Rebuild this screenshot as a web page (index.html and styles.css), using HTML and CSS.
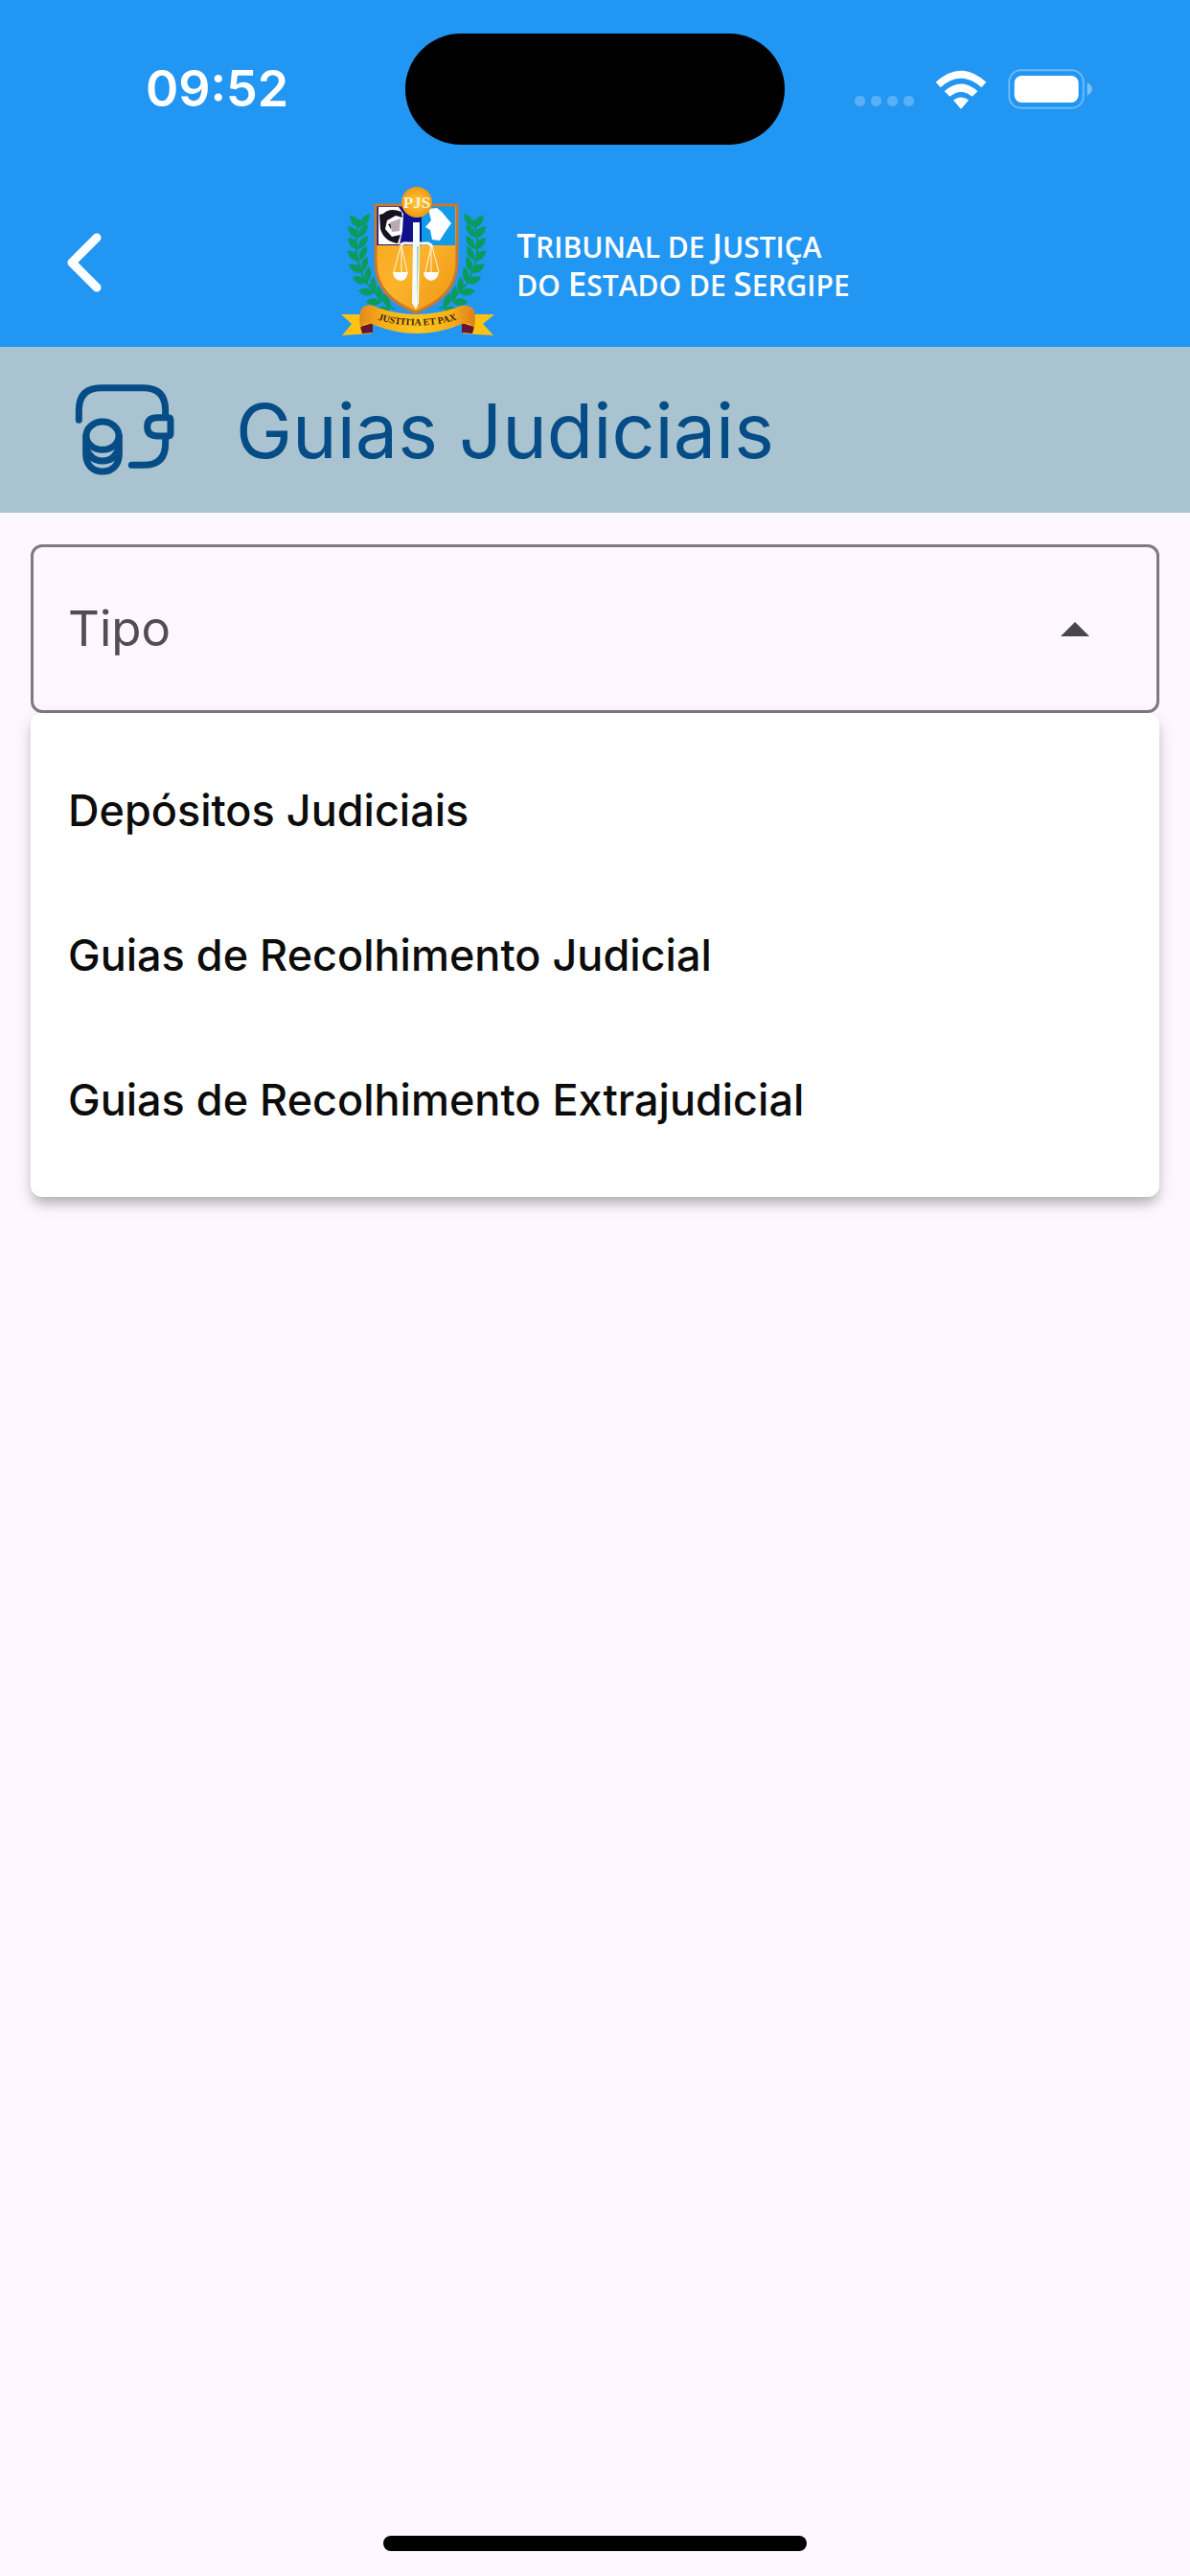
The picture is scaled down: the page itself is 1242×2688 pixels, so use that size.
FILE: index.html
```html
<!DOCTYPE html>
<html lang="pt-BR">
<head>
<meta charset="utf-8">
<meta name="viewport" content="width=device-width, initial-scale=1">
<title>Guias Judiciais</title>
<link rel="stylesheet" href="styles.css">
</head>
<body>
<div class="screen">
  <header class="top">
    <div class="status">
      <time class="clock">09:52</time>
      <div class="island"></div>
      <div class="indicators">
        <svg class="signal" viewBox="0 0 62 12" aria-hidden="true">
          <rect x="0" y="0" width="11" height="11" rx="5"/><rect x="17" y="0" width="11" height="11" rx="5"/><rect x="34" y="0" width="11" height="11" rx="5"/><rect x="51" y="0" width="11" height="11" rx="5"/>
        </svg>
        <svg class="wifi" viewBox="346 124 162 122" aria-hidden="true">
          <path d="M348 162 Q427 90 506 162 L491 178 Q427 122 363 178 Z"/>
          <path d="M375 190 Q427 144 479 190 L462 207 Q427 178 392 207 Z"/>
          <path d="M403 218 Q427 200 451 218 L430 243 Q427 246 424 243 Z"/>
        </svg>
        <svg class="battery" viewBox="576 122 262 126" aria-hidden="true">
          <rect class="shell" x="579" y="126" width="232" height="118" rx="36"/>
          <rect x="595" y="143" width="201" height="84" rx="23"/>
          <path class="cap" d="M823 165 Q838 172 838 185 Q838 198 823 205 Z"/>
        </svg>
      </div>
    </div>
    <div class="appbar">
      <button class="back" type="button" aria-label="Voltar">
        <svg viewBox="0 0 36 62" aria-hidden="true"><path d="M31 5 L5 31 L31 57"/></svg>
      </button>
      <div class="brand">
        <svg class="crest" viewBox="15 1 162 176" aria-hidden="true">
          <defs>
            <linearGradient id="gold" x1="0" y1="0" x2="1" y2="1"><stop offset="0" stop-color="#f5a414"/><stop offset=".5" stop-color="#fbb42c"/><stop offset="1" stop-color="#ee9410"/></linearGradient>
            <radialGradient id="seal"><stop offset="0" stop-color="#ffc93a"/><stop offset="1" stop-color="#f09a14"/></radialGradient>
            <linearGradient id="band" x1="0" y1="0" x2="1" y2="0"><stop offset="0" stop-color="#e28a1a"/><stop offset=".2" stop-color="#f6ae18"/><stop offset=".5" stop-color="#fcc51d"/><stop offset=".8" stop-color="#f6ae18"/><stop offset="1" stop-color="#dc801c"/></linearGradient>
            <path id="leaf" d="M0 0 Q-10 0 -11 -12 Q0 -11 0 0 Z M0 0 Q10 -3 10 -14 Q-1 -11 0 0 Z"/>
            <path id="motto" d="M55 149 Q95 160 136 149"/>
            <g id="branch">
              <path class="stem" d="M36 44 Q24 82 44 112 Q54 126 72 138"/>
              <use href="#leaf" x="36" y="52"/>
              <use href="#leaf" x="34" y="63"/>
              <use href="#leaf" x="34" y="75"/>
              <use href="#leaf" transform="translate(35 87) rotate(-8)"/>
              <use href="#leaf" transform="translate(38 99) rotate(-18)"/>
              <use href="#leaf" transform="translate(43 110) rotate(-28)"/>
              <use href="#leaf" transform="translate(50 121) rotate(-38)"/>
              <use href="#leaf" transform="translate(58 130) rotate(-48)"/>
              <use href="#leaf" transform="translate(67 137) rotate(-58)"/>
            </g>
          </defs>
          <use href="#branch" class="leaves"/>
          <use href="#branch" class="leaves" transform="translate(190 0) scale(-1 1)"/>
          <path fill="url(#gold)" d="M52 29 H137 V88 C137 118 116 132 94 141 C72 132 52 118 52 88 Z"/>
          <path fill="#10108c" d="M53 30 H100 V71 H53 Z"/>
          <path fill="#109bea" d="M100 30 H135 V71 H100 Z"/>
          <path fill="#fff" d="M55 31 H76 L81 38 L80 56 L77 70 H55 Z"/>
          <path fill="#17121f" d="M60 38 Q67 31 79 36 L80 42 L73 40 L64 45 L62 54 L69 62 L78 60 L75 69 Q61 67 57 54 L56 39 Z M65 49 L72 47 L68 54 Z"/>
          <path fill="#b9aab4" d="M67 47 L78 43 L77 56 L69 57 Z"/>
          <path fill="#fff" d="M107 33 L116 32 L121 36 L131 48 L124 58 L119 66 L111 65 L109 55 L104 52 L110 45 Z"/>
          <path fill="none" stroke="#c9792d" stroke-width="3" d="M52 29 H137 V88 C137 118 116 132 94 141 C72 132 52 118 52 88 Z"/>
          <g fill="none" stroke="#fff7e6">
            <path stroke-width="3" d="M78 71 Q80 68 86 69 H103 Q109 68 111 73"/>
            <path stroke-width="1" d="M78 72 L71 99 M79 72 V99 M79 72 L85 99 M110 72 L104 99 M110 72 V99 M111 72 L118 99"/>
          </g>
          <path fill="#fff" d="M70 99 H86 Q84 108 78 108 Q71 107 70 99 Z M102 99 H118 Q117 107 110 108 Q103 107 102 99 Z"/>
          <path fill="#f4fbfb" d="M91 47 H98 V67 L97 131 L94 138 L90 131 L91 67 Z"/>
          <path fill="#9bd0d4" d="M95 72 H97 L95 135 Z"/>
          <circle cx="95" cy="26" r="16" fill="url(#seal)"/>
          <text class="seal-text" x="95" y="32" text-anchor="middle">PJS</text>
          <path fill="#fdc313" d="M16 143 L48 143 V163 L17 165 L27 153 Z M176 143 L143 143 V163 L175 165 L164 153 Z"/>
          <path fill="#6a1231" d="M36 156 L49 152 V162 L38 163 Z M155 156 L142 152 V162 L153 163 Z"/>
          <path fill="url(#band)" d="M36 157 Q33 136 42 134 Q48 132 54 136 Q95 150 136 136 Q144 132 151 135 Q158 138 155 157 Q149 150 140 154 Q95 172 50 154 Q42 150 36 157 Z"/>
          <text class="motto-text" text-anchor="middle"><textPath href="#motto" startOffset="50%">JUSTITIA ET PAX</textPath></text>
        </svg>
        <div class="court">
          <span><b>T</b>RIBUNAL DE <b>J</b>USTIÇA</span>
          <span>DO <b>E</b>STADO DE <b>S</b>ERGIPE</span>
        </div>
      </div>
    </div>
  </header>

  <div class="section-bar">
    <svg class="wallet" viewBox="115 544 312 291" aria-hidden="true">
      <path d="M128 659 V628 Q128 558 198 558 H330 Q399 558 399 628 V650"/>
      <path d="M407 651 H374 Q342 651 342 680 Q342 709 374 709 H407 Q415 709 415 701 V659 Q415 651 407 651 Z"/>
      <path d="M399 710 V732 Q399 800 331 800 H293"/>
      <ellipse cx="202" cy="708" rx="51" ry="44"/>
      <path d="M150 708 V765 C150 800 172 820 202 820 S254 800 254 765 V708"/>
      <path d="M151 748 Q165 787 202 787 T253 748"/>
    </svg>
    <h1 class="title">Guias Judiciais</h1>
  </div>

  <main class="content">
    <div class="field">
      <select class="control" id="tipo">
        <option value=""></option>
        <option>Depósitos Judiciais</option>
        <option>Guias de Recolhimento Judicial</option>
        <option>Guias de Recolhimento Extrajudicial</option>
      </select>
      <label class="label" for="tipo">Tipo</label>
      <svg class="arrow" viewBox="0 0 30 15" aria-hidden="true"><path d="M0 15 L15 0 L30 15 Z"/></svg>
      <ul class="menu" role="listbox" aria-label="Tipo">
        <li class="option" role="option">Depósitos Judiciais</li>
        <li class="option" role="option">Guias de Recolhimento Judicial</li>
        <li class="option" role="option">Guias de Recolhimento Extrajudicial</li>
      </ul>
    </div>
  </main>

  <footer class="home"><div class="home-bar"></div></footer>
</div>
</body>
</html>
```
FILE: styles.css
```css
* { box-sizing: border-box; }

body {
  margin: 0;
  background: #fef7ff;
  font-family: Inter, "Liberation Sans", sans-serif;
}

.screen {
  display: flex;
  flex-direction: column;
  min-height: 100vh;
}

.top { background: #2196f3; }

.status {
  display: grid;
  grid-template-columns: 1fr auto 1fr;
  align-items: center;
  height: 186px;
}

.clock {
  padding-left: 30px;
  color: #fff;
  font-size: 52px;
  font-weight: 600;
  line-height: 64px;
  text-align: center;
}

.island {
  width: 396px;
  height: 116px;
  border-radius: 58px;
  background: #000;
}

.indicators {
  display: flex;
  align-items: center;
  justify-content: flex-end;
  gap: 22px;
  padding-right: 102px;
  fill: #fff;
}

.signal {
  width: 62px;
  height: 12px;
  margin-top: 26px;
  opacity: .25;
}

.wifi { width: 54px; height: 41px; }

.battery { width: 88px; height: 42px; }

.shell {
  fill: none;
  stroke: #fff;
  stroke-width: 6;
  opacity: .35;
}

.cap { opacity: .4; }

.appbar {
  display: grid;
  grid-template-columns: 1fr auto 1fr;
  align-items: center;
  height: 176px;
}

.back {
  justify-self: start;
  display: flex;
  margin: 0;
  padding: 24px 24px 24px 70px;
  border: 0;
  background: none;
}

.back svg {
  width: 36px;
  height: 62px;
  fill: none;
  stroke: #fff;
  stroke-width: 9;
  stroke-linecap: round;
  stroke-linejoin: round;
}

.brand {
  display: flex;
  align-items: center;
  gap: 22px;
}

.crest { width: 162px; height: 176px; }

.leaves { fill: #0d9a5c; }

.stem {
  fill: none;
  stroke: #0d9a5c;
  stroke-width: 2;
}

.seal-text {
  fill: #fff3cf;
  font: bold 17px "Liberation Serif", serif;
}

.motto-text {
  fill: #3a2410;
  font: bold 10px "Liberation Serif", serif;
}

.court {
  display: flex;
  flex-direction: column;
  padding-top: 4px;
  color: #fff;
  font-family: "Open Sans", "Noto Sans", sans-serif;
  font-size: 30px;
  font-weight: 600;
  line-height: 40px;
  white-space: nowrap;
}

.court span { height: 40px; }

.court b {
  font-size: 35px;
  font-weight: 600;
}

.section-bar {
  display: flex;
  align-items: center;
  gap: 64px;
  height: 173px;
  padding: 0 78px;
  background: #a9c4d0;
}

.wallet {
  width: 104px;
  height: 97px;
  fill: none;
  stroke: #064d87;
  stroke-width: 21;
  stroke-linecap: round;
  stroke-linejoin: round;
}

.title {
  margin: 0;
  color: #064d87;
  font-size: 79px;
  font-weight: 400;
  line-height: 96px;
}

.content {
  flex: 1;
  padding: 33px 32px;
}

.field {
  position: relative;
  display: grid;
  grid-template-columns: 1fr auto;
  align-items: center;
}

.control {
  grid-area: 1 / 1 / 2 / 3;
  width: 100%;
  height: 176px;
  border: 3px solid #7f7885;
  border-radius: 12px;
  background: transparent;
  font: inherit;
  font-size: 51px;
  appearance: none;
}

.label {
  grid-area: 1 / 1;
  padding-left: 39px;
  color: #514c57;
  font-size: 51px;
  line-height: 64px;
  pointer-events: none;
}

.arrow {
  grid-area: 1 / 2;
  width: 30px;
  height: 15px;
  margin-right: 73px;
  fill: #49454f;
  pointer-events: none;
}

.menu {
  position: absolute;
  top: 100%;
  left: 0;
  right: 0;
  margin: 0;
  padding: 26px 0;
  border-radius: 12px;
  background: #fff;
  box-shadow: 0 9px 12px -3px rgba(0, 0, 0, .2), 0 6px 18px rgba(0, 0, 0, .14);
  list-style: none;
}

.option {
  padding: 0 39px;
  color: #0c0c0c;
  font-size: 45px;
  font-weight: 500;
  line-height: 151px;
}

.home {
  display: flex;
  justify-content: center;
  padding-bottom: 26px;
}

.home-bar {
  width: 442px;
  height: 16px;
  border-radius: 8px;
  background: #000;
}
```
